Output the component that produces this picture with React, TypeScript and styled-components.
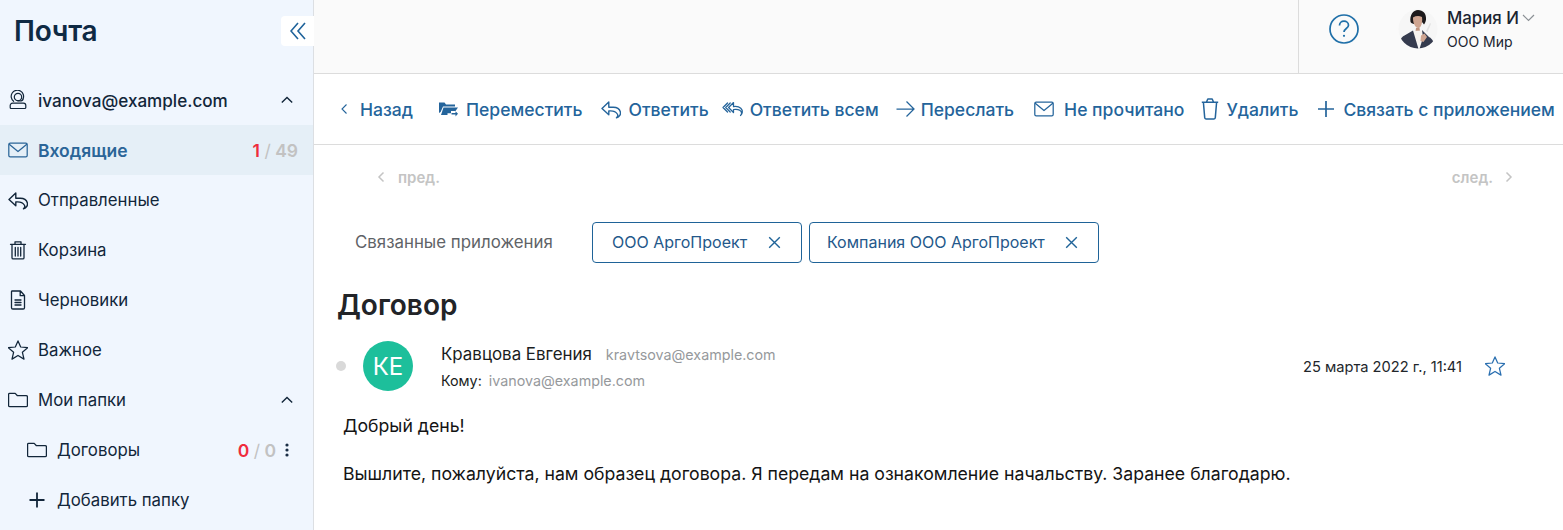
import React from "react";
import styled, { createGlobalStyle } from "styled-components";

const Global = createGlobalStyle`
  html, body { margin: 0; padding: 0; background: #fff; }
  body { font-family: Inter, "Noto Sans", sans-serif; overflow: hidden; }
  * { box-sizing: border-box; }
`;

const Page = styled.div`display: flex; width: 1563px; height: 530px; overflow: hidden;`;
const Sidebar = styled.aside`
  position: relative; flex: 0 0 314px; background: #f0f6fe; border-right: 1px solid #dcdfe3;
  color: #12263a; display: flex; flex-direction: column;
`;
const Title = styled.h1`margin: 0; height: 75px; padding: 12px 0 0 14px; font-size: 28px; line-height: 38px; font-weight: 600; letter-spacing: -0.2px; color: #0f2a44;`;
const Collapse = styled.button`
  position: absolute; top: 16px; right: -1px; width: 33px; height: 30px; background: #fff; border: 0;
  border-radius: 4px 0 0 4px; padding: 0; display: flex; align-items: center; justify-content: center; color: #1f639b;
`;
const Row = styled.div<{ $active?: boolean; $indent?: boolean }>`
  height: 50px; display: flex; align-items: center; flex: none;
  padding: 0 15px 0 ${(p) => (p.$indent ? "27px" : "8px")};
  background: ${(p) => (p.$active ? "#e5eff7" : "transparent")};
  color: ${(p) => (p.$active ? "#2b6598" : "#12263a")};
`;
const RowIcon = styled.span`width: 20px; height: 20px; margin-right: 10px; display: flex; flex: none;`;
const RowLabel = styled.span<{ $weight?: number; $size?: number }>`font-size: ${(p) => p.$size ?? 16.8}px; font-weight: ${(p) => p.$weight ?? 400}; flex: 1; white-space: nowrap;`;
const Count = styled.span`font-size: 17.5px; font-weight: 600; color: #c2c2c2; white-space: nowrap;`;
const Red = styled.span`color: #ef2b3c;`;
const ThinSlash = styled.span`font-weight: 400;`;
const Dots = styled.span`display: flex; width: 16px; margin-left: 3px; margin-right: 3px; justify-content: center;`;
const Chevron = styled.span`display: flex; margin-right: 4px; color: #12263a;`;

const Main = styled.main`flex: 1; min-width: 0; display: flex; flex-direction: column;`;
const Header = styled.header`height: 74px; flex: none; background: #fafafa; border-bottom: 1px solid #dcdcdc; display: flex; justify-content: flex-end;`;
const UserZone = styled.div`width: 265px; border-left: 1px solid #dcdcdc; display: flex; align-items: center; padding: 0 0 15px 30px;`;
const Help = styled.span`display: flex; width: 30px; height: 30px; margin-right: 39px;`;
const Portrait = styled.span`display: flex; width: 40px; height: 40px; margin-right: 9px;`;
const UserText = styled.div`display: flex; flex-direction: column; color: #1a2430; margin-top: 1px;`;
const UserName = styled.div`font-size: 16.8px; line-height: 23px; font-weight: 500; display: flex; align-items: center; gap: 3px;`;
const UserOrg = styled.div`font-size: 14px; line-height: 23px; font-weight: 400;`;

const Toolbar = styled.nav`height: 71px; flex: none; border-bottom: 1px solid #dcdcdc; display: flex; align-items: center; padding-left: 26px; color: #24649b; white-space: nowrap;`;
const ToolItem = styled.span<{ $left: number; $gap: number }>`
  display: flex; align-items: center; margin-left: ${(p) => p.$left}px; gap: ${(p) => p.$gap}px;
  font-size: 17.55px; font-weight: 500;
`;

const Pager = styled.div`height: 64px; flex: none; display: flex; justify-content: space-between; align-items: center; padding: 0 50px 0 63px; font-size: 15px; font-weight: 600; color: #c4c4c4;`;
const PagerSide = styled.span<{ $gap: number }>`display: flex; align-items: center; gap: ${(p) => p.$gap}px;`;
const Linked = styled.div`height: 42px; flex: none; margin-top: 12px; display: flex; align-items: center; padding-left: 41px;`;
const LinkedLabel = styled.span`font-size: 16.85px; color: #5f6367; width: 237px; flex: none;`;
const Tag = styled.span<{ $width: number; $pad: number }>`
  width: ${(p) => p.$width}px; height: 41px; flex: none; margin-right: 7px; border: 1px solid #1f6398; border-radius: 4px;
  display: flex; align-items: center; justify-content: space-between; padding: 0 20px 0 ${(p) => p.$pad}px; font-size: 16px; color: #24588a;
`;
const Subject = styled.h2`margin: 0; padding: 26px 0 0 23px; font-size: 28px; line-height: 32px; font-weight: 600; color: #222428;`;
const Meta = styled.div`display: flex; align-items: center; height: 50px; margin-top: 20px; padding: 0 58px 0 22px;`;
const Dot = styled.span`width: 10px; height: 10px; border-radius: 50%; background: #d9d9d9; flex: none; margin-right: 17px;`;
const Initials = styled.span`
  width: 50px; height: 50px; border-radius: 50%; background: #1dbf9b; color: #fff; font-size: 24px; font-weight: 400;
  display: flex; align-items: center; justify-content: center; flex: none; margin-right: 28px;
`;
const Who = styled.div`flex: 1; display: flex; flex-direction: column; gap: 7px; margin-top: 3px;`;
const WhoLine = styled.div`display: flex; align-items: baseline; line-height: 19px; color: #1a1d21;`;
const SenderName = styled.span`font-size: 16.9px; margin-right: 14px;`;
const ToLabel = styled.span`font-size: 14.3px; margin-right: 7px;`;
const Mail = styled.span`font-size: 14.3px; color: #96999c;`;
const DateText = styled.span`font-size: 14.65px; color: #22262b; margin: 2px 23px 0 0;`;
const StarBox = styled.span`display: flex; width: 20px; height: 20px; color: #2a6fb0;`;
const Body = styled.div`padding: 23px 0 0 29px; font-size: 17.68px; color: #141414;`;
const Para = styled.p`margin: 0 0 25px; line-height: 23px;`;

const S = (p: React.SVGProps<SVGSVGElement>) => (
  <svg width="20" height="20" viewBox="0 0 20 20" fill="none" stroke="currentColor" strokeWidth="1.25" strokeLinecap="round" strokeLinejoin="round" {...p} />
);
const MailIcon = () => <S><rect x="0.8" y="3.2" width="18.4" height="13.6" rx="1.4" /><path d="M1.5 4.5 10 11.500l8.500-7" /></S>;
const ReplyIcon = () => <S strokeWidth="1.4"><path d="M7.800 3 1 9.500l6.800 6.300V12c3-.3 6.800.3 8.500 3 .9 1.500.3 3-.8 3.800 3-.8 4.500-3.500 3.800-6-.9-3.200-4-4.600-7-4.600H7.800Z" /></S>;
const TrashIcon = () => <S strokeWidth="1.3"><path d="M2.500 4.300h15M7 4V1.800h6V4M4 4.500v13.200c0 .7.500 1.200 1.200 1.200h9.600c.7 0 1.200-.5 1.200-1.200V4.500M7.300 7.500v8.500M10 7.500v8.500M12.700 7.500v8.500" /></S>;
const DocIcon = () => <S strokeWidth="1.3"><path d="M4 1h8.500l4 4.500v12.300c0 .7-.6 1.200-1.300 1.200H4.800c-.8 0-1.300-.5-1.300-1.200V1.800c0-.5.200-.8.500-.8ZM12.200 1.300v4.400h4.200M7 10h6M7 12.500h6M7 15h6" /></S>;
const StarIcon = () => <S><path d="M10 .9 12.700 7l7 .7-5.300 4.600 1.600 6.800L10 15.500l-6 3.600 1.600-6.800L.3 7.700l7-.7Z" /></S>;
const FolderIcon = () => <S><path d="M.6 15.500V4.300c0-.6.400-1 1-1h5.600l2 2.200h8.900c.8 0 1.300.5 1.300 1.200v8.800c0 .7-.5 1.200-1.300 1.200H1.900c-.8 0-1.300-.5-1.300-1.200Z" /></S>;
const PlusIcon = () => <S strokeWidth="1.8" strokeLinecap="butt"><path d="M10 2.500v15M2.500 10h15" /></S>;
const UserIcon = () => <S strokeWidth="1.2"><path d="M5.600 11.300A6.200 6.200 0 1 1 15 9" /><circle cx="10" cy="7" r="3.700" /><path d="M15 9c0 1.400-1.500 2-3.500 2H10" /><path d="M4.500 13.200h11c1.300 0 2.300 1 2.300 2.300v2c0 .6-.5 1-1 1H3.200c-.5 0-1-.4-1-1v-2c0-1.300 1-2.300 2.300-2.300Z" /></S>;
const ChevUp = () => <svg width="14" height="14" viewBox="0 0 14 14" fill="none" stroke="currentColor" strokeWidth="1.4"><path d="M1.800 9.500 7 4.500l5.200 5" /></svg>;
const MoreIcon = () => <svg width="4" height="14" viewBox="0 0 4 14" fill="#1a2e45"><circle cx="2" cy="2" r="1.600" /><circle cx="2" cy="7" r="1.600" /><circle cx="2" cy="12" r="1.600" /></svg>;

const BackIcon = () => <svg width="8" height="12" viewBox="0 0 8 12" fill="none" stroke="currentColor" strokeWidth="1.100"><path d="M6.500 1.500 2 6l4.500 4.500" /></svg>;
const MoveIcon = () => <svg width="19" height="16" viewBox="0 0 19 16" fill="currentColor"><path d="M0 1.500h5.500l1.500 2h9v2H4L1.600 11 0 12Z" /><path d="M4.500 6.500H19L16.500 10H12v2.200H8.500V14H2Z" /><path d="M12.500 12h4V10.200l2.500 2.600-2.500 2.700v-1.900h-4Z" /></svg>;
const ReplyAllIcon = () => <svg width="22" height="20" viewBox="0 0 22 20" fill="none" stroke="currentColor" strokeWidth="1.25" strokeLinejoin="round" strokeLinecap="round"><path d="M5.500 4 1 8.500 5.500 13M8.200 4 3.700 8.500 8.200 13" /><path d="M11.500 3.500 6.600 8.500l4.900 5v-3c3.200-.4 7.300 0 8 3.200.3 1.300-.1 2.200-1 2.800 1.800-1.700 3-4.700.3-7.300-2-1.800-4.700-1.900-7.300-1.600Z" /></svg>;
const ForwardIcon = () => <svg width="19" height="20" viewBox="0 0 19 20" fill="none" stroke="currentColor" strokeWidth="1.250"><path d="M.5 10h17M10.500 2.500 18 10l-7.500 7.500" /></svg>;
const TrashTool = () => <svg width="18" height="22" viewBox="0 0 18 22" fill="none" stroke="currentColor" strokeWidth="1.500" strokeLinejoin="round"><path d="M.8 4.200h16.400M5.500 4 6.800 1h4.400l1.300 3M2.400 4.200l1.300 15.400c0 .8.500 1.400 1.300 1.400h8c.8 0 1.300-.6 1.300-1.400l1.300-15.400" /></svg>;
const PlusTool = () => <svg width="16" height="16" viewBox="0 0 16 16" fill="none" stroke="currentColor" strokeWidth="1.700"><path d="M8 0v16M0 8h16" /></svg>;
const Close = () => <svg width="13" height="13" viewBox="0 0 13 13" fill="none" stroke="#1f6398" strokeWidth="1.400"><path d="M1.200 1.200l10.600 10.600M11.800 1.200 1.200 11.800" /></svg>;

const PortraitArt = () => (
  <svg width="40" height="40" viewBox="0 0 40 40">
    <defs>
      <clipPath id="pc"><circle cx="20" cy="20" r="19.500" /></clipPath>
    </defs>
    <g clipPath="url(#pc)">
      <rect width="40" height="40" fill="#f6f6f6" />
      <path d="M12.500 13C11.500 6 15 1 20 1s8.500 3.500 8 9.500c-.2 2-1 3.800-2 5l-2-2.500-6 .5-2.500 1.500c-1.200-.5-2.300-1-3-2Z" fill="#1d1a1c" />
      <path d="M15 8.500c3-1.700 6-1.900 9-.5.500 3.500.2 7-1.400 9.500-1.300 2-3.400 2-4.900.2-2-2.500-2.900-5.800-2.700-9.200Z" fill="#cfa591" />
      <path d="M18 19h3.500l.5 3.500h-4.500Z" fill="#c09580" />
      <path d="M14.500 22l9-.5 2.500 4-3.500 8-2.500 1-6-7Z" fill="#f7f3ef" />
      <path d="M1 40c-.5-7 1.500-11.500 5.500-13.500l8.500-5L20.500 40ZM36 40c.5-6-1-10-5-12l-7-7 1 7.500L21.500 40Z" fill="#353b4e" />
      <path d="M23 26.500l3.500-2 2.500 3.500-3.500 5-3-1Z" fill="#cfa591" />
      <path d="M28 22l4-8 1 .7-3.500 8.500Z" fill="#e2e2e2" />
    </g>
  </svg>
);

const tools = [
  { icon: <BackIcon />, label: "Назад", left: 0, gap: 12 },
  { icon: <MoveIcon />, label: "Переместить", left: 26, gap: 8 },
  { icon: <ReplyIcon />, label: "Ответить", left: 19, gap: 7 },
  { icon: <ReplyAllIcon />, label: "Ответить всем", left: 13, gap: 6 },
  { icon: <ForwardIcon />, label: "Переслать", left: 17, gap: 6 },
  { icon: <MailIcon />, label: "Не прочитано", left: 20, gap: 10 },
  { icon: <TrashTool />, label: "Удалить", left: 17, gap: 7 },
  { icon: <PlusTool />, label: "Связать с приложением", left: 20, gap: 9 },
];

export default function App() {
  return (
    <Page>
      <Global />
      <Sidebar>
        <Title>Почта</Title>
        <Collapse aria-label="Свернуть">
          <svg width="16" height="18" viewBox="0 0 16 18" fill="none" stroke="currentColor" strokeWidth="1.600"><path d="M8 1 1 9l7 8M15 1 8 9l7 8" /></svg>
        </Collapse>
        <Row>
          <RowIcon><UserIcon /></RowIcon>
          <RowLabel $weight={500} $size={17.1}>ivanova@example.com</RowLabel>
          <Chevron><ChevUp /></Chevron>
        </Row>
        <Row $active>
          <RowIcon><MailIcon /></RowIcon>
          <RowLabel $weight={600} $size={17.5}>Входящие</RowLabel>
          <Count><Red>1</Red> <ThinSlash>/</ThinSlash> 49</Count>
        </Row>
        <Row><RowIcon><ReplyIcon /></RowIcon><RowLabel>Отправленные</RowLabel></Row>
        <Row><RowIcon><TrashIcon /></RowIcon><RowLabel>Корзина</RowLabel></Row>
        <Row><RowIcon><DocIcon /></RowIcon><RowLabel>Черновики</RowLabel></Row>
        <Row><RowIcon><StarIcon /></RowIcon><RowLabel>Важное</RowLabel></Row>
        <Row>
          <RowIcon><FolderIcon /></RowIcon>
          <RowLabel>Мои папки</RowLabel>
          <Chevron><ChevUp /></Chevron>
        </Row>
        <Row $indent>
          <RowIcon><FolderIcon /></RowIcon>
          <RowLabel>Договоры</RowLabel>
          <Count><Red>0</Red> <ThinSlash>/</ThinSlash> 0</Count>
          <Dots><MoreIcon /></Dots>
        </Row>
        <Row $indent>
          <RowIcon><PlusIcon /></RowIcon>
          <RowLabel>Добавить папку</RowLabel>
        </Row>
      </Sidebar>
      <Main>
        <Header>
          <UserZone>
            <Help>
              <svg width="30" height="30" viewBox="0 0 30 30" fill="none" stroke="#1f6fa8" strokeWidth="1.700"><circle cx="15" cy="15" r="14" /><path d="M10.500 11.500c0-2.600 2-4.300 4.500-4.300s4.500 1.700 4.500 4c0 3.300-4.500 3.300-4.500 6.800" /><circle cx="15" cy="21.800" r="1.100" fill="#1f6fa8" stroke="none" /></svg>
            </Help>
            <Portrait><PortraitArt /></Portrait>
            <UserText>
              <UserName>
                Мария И
                <svg width="13" height="8" viewBox="0 0 13 8" fill="none" stroke="#8b9095" strokeWidth="1.200"><path d="M1 1l5.500 5.500L12 1" /></svg>
              </UserName>
              <UserOrg>ООО Мир</UserOrg>
            </UserText>
          </UserZone>
        </Header>
        <Toolbar>
          {tools.map((t) => (
            <ToolItem key={t.label} $left={t.left} $gap={t.gap}>{t.icon}{t.label}</ToolItem>
          ))}
        </Toolbar>
        <Pager>
          <PagerSide $gap={13}>
            <svg width="8" height="12" viewBox="0 0 8 12" fill="none" stroke="#c4c4c4" strokeWidth="1.500"><path d="M6.500 1.500 2 6l4.500 4.500" /></svg>
            пред.
          </PagerSide>
          <PagerSide $gap={12}>
            след.
            <svg width="8" height="12" viewBox="0 0 8 12" fill="none" stroke="#c4c4c4" strokeWidth="1.500"><path d="M1.500 1.500 6 6l-4.500 4.500" /></svg>
          </PagerSide>
        </Pager>
        <Linked>
          <LinkedLabel>Связанные приложения</LinkedLabel>
          <Tag $width={210} $pad={19}>ООО АргоПроект<Close /></Tag>
          <Tag $width={290} $pad={17}>Компания ООО АргоПроект<Close /></Tag>
        </Linked>
        <Subject>Договор</Subject>
        <Meta>
          <Dot />
          <Initials>КЕ</Initials>
          <Who>
            <WhoLine><SenderName>Кравцова Евгения</SenderName><Mail>kravtsova@example.com</Mail></WhoLine>
            <WhoLine><ToLabel>Кому:</ToLabel><Mail>ivanova@example.com</Mail></WhoLine>
          </Who>
          <DateText>25 марта 2022 г., 11:41</DateText>
          <StarBox><StarIcon /></StarBox>
        </Meta>
        <Body>
          <Para>Добрый день!</Para>
          <Para>Вышлите, пожалуйста, нам образец договора. Я передам на ознакомление начальству. Заранее благодарю.</Para>
        </Body>
      </Main>
    </Page>
  );
}
